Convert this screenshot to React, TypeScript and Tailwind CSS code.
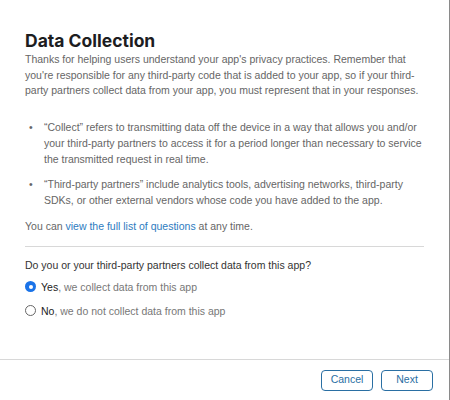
import { useState } from 'react';

/*  Data collection dialog.
 */
export default function App() {
  const [collects, setCollects] = useState('yes');

  return (
    <div className="w-[450px] h-[400px] bg-white flex flex-col border-r border-[#8a8a8a] font-['Liberation_Sans',Arial,sans-serif]">
      <div className="flex-grow px-[25px] pt-[30px]">
        <h1 className="text-[17.5px] leading-[22px] font-bold text-[#1d1d1f] font-['Inter',sans-serif]">Data Collection</h1>
        <p className="text-[10.5px] leading-[15.5px] text-[#666]">
          Thanks for helping users understand your app's privacy practices. Remember that you're responsible for any third-party code that is added to your app, so if your third-party partners collect data from your app, you must represent that in your responses.
        </p>
        <ul className="mt-[20px] flex flex-col gap-[9px] text-[10.5px] leading-[16px] text-[#666]">
          <li className="flex">
            <span className="w-[19px] pl-[4px] shrink-0">•</span>
            <span>“Collect” refers to transmitting data off the device in a way that allows you and/or your third-party partners to access it for a period longer than necessary to service the transmitted request in real time.</span>
          </li>
          <li className="flex">
            <span className="w-[19px] pl-[4px] shrink-0">•</span>
            <span>“Third-party partners” include analytics tools, advertising networks, third-party SDKs, or other external vendors whose code you have added to the app.</span>
          </li>
        </ul>
        <p className="mt-[10px] text-[10.5px] leading-[16px] text-[#666]">
          You can <a className="text-[#2d7bc0]">view the full list of questions</a> at any time.
        </p>
        <div className="mt-[12px] border-t border-[#d8d8d8]" />
        <p className="mt-[10px] text-[10.5px] leading-[16px] text-[#333]">Do you or your third-party partners collect data from this app?</p>
        <div className="mt-[6px] flex flex-col gap-[8px] text-[10.5px] leading-[16px] text-[#777]">
          <label className="flex items-center gap-[5px]" onClick={() => setCollects('yes')}>
            <Radio checked={collects === 'yes'} />
            <span><span className="text-[#222]">Yes</span>, we collect data from this app</span>
          </label>
          <label className="flex items-center gap-[5px]" onClick={() => setCollects('no')}>
            <Radio checked={collects === 'no'} />
            <span><span className="text-[#222]">No</span>, we do not collect data from this app</span>
          </label>
        </div>
      </div>
      <div className="h-[41px] border-t border-[#d8d8d8] flex items-center justify-end gap-[8px] pr-[16px]">
        <button className="w-[52px] h-[21px] rounded-[4px] border border-[#2a6fa3] text-[10.5px] text-[#2a6fa3]">Cancel</button>
        <button className="w-[52px] h-[21px] rounded-[4px] border border-[#2a6fa3] text-[10.5px] text-[#2a6fa3]">Next</button>
      </div>
    </div>
  );
}

function Radio({ checked }: { checked: boolean }) {
  return checked ? (
    <span className="w-[11px] h-[11px] rounded-full bg-[#1a73e8] flex items-center justify-center shrink-0">
      <span className="w-[4px] h-[4px] rounded-full bg-white" />
    </span>
  ) : (
    <span className="w-[11px] h-[11px] rounded-full border border-[#666] bg-white shrink-0" />
  );
}
